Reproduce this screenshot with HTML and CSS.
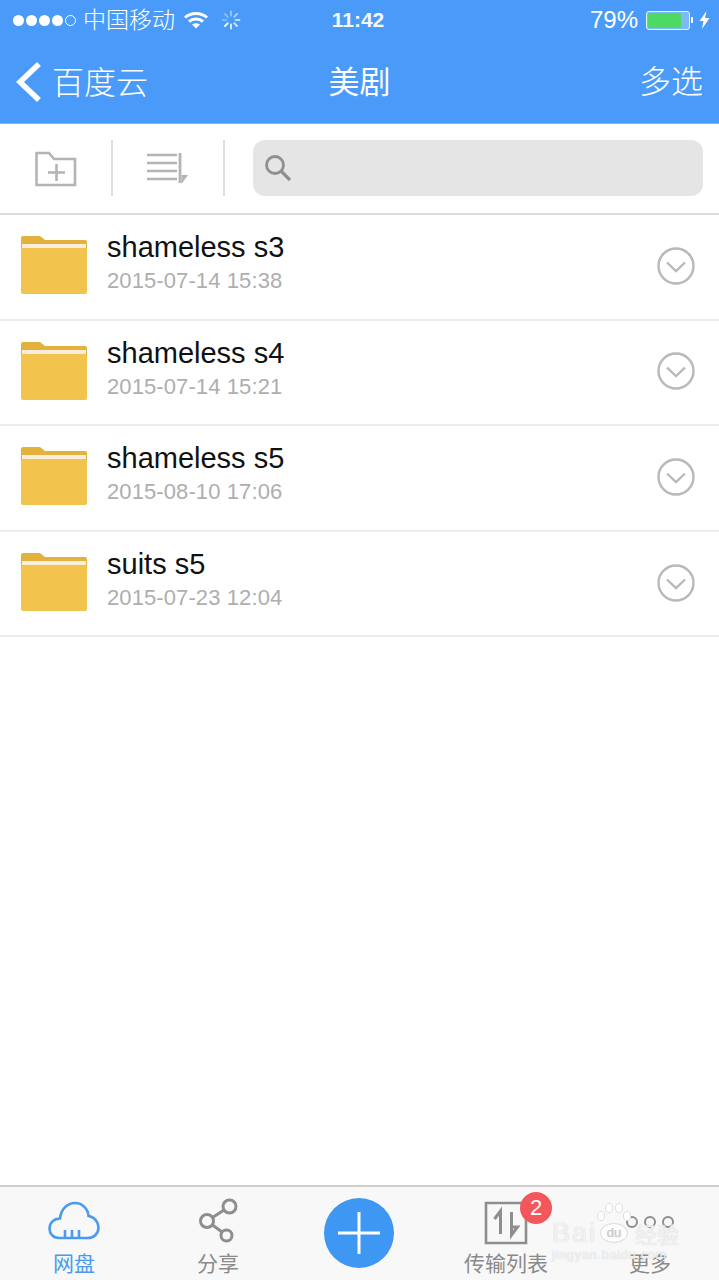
FILE: index.html
```html
<!DOCTYPE html>
<html lang="zh-CN">
<head>
    <meta charset="UTF-8">
    <meta name="viewport" content="width=device-width, initial-scale=1.0">
    <title>美剧</title>
    <link rel="stylesheet" href="styles.css">
</head>
<body>
<div class="app">
    <header class="top">
        <div class="status">
            <div class="status-left">
                <span class="dots"><i></i><i></i><i></i><i></i><i class="off"></i></span>
                <span class="carrier">中国移动</span>
                <svg class="wifi" width="24" height="18" viewBox="0 0 24 18">
                    <path d="M1 6.500C7 1 17 1 23 6.500" fill="none" stroke="#fff" stroke-width="3"/>
                    <path d="M5 10.500C9 7 15 7 19 10.500" fill="none" stroke="#fff" stroke-width="3"/>
                    <path d="M8 13.500C10.500 11.800 13.500 11.800 16 13.500L12 17.500Z" fill="#fff"/>
                </svg>
                <svg class="spinner" width="20" height="20" viewBox="0 0 20 20" stroke="#fff" stroke-width="1.800" stroke-linecap="round">
                    <path d="M10 1.500V5.500" opacity=".45"/>
                    <path d="M16 4L13.200 6.800" opacity=".55"/>
                    <path d="M18.500 10H14.500" opacity=".65"/>
                    <path d="M16 16L13.200 13.200" opacity=".75"/>
                    <path d="M10 18.500V14.500" opacity=".85"/>
                    <path d="M4 16L6.800 13.200"/>
                    <path d="M1.500 10H5.500" opacity=".3"/>
                    <path d="M4 4L6.800 6.800" opacity=".35"/>
                </svg>
            </div>
            <div class="time">11:42</div>
            <div class="status-right">
                <span class="percent">79%</span>
                <span class="battery"><span class="battery-level"></span></span>
                <span class="battery-tip"></span>
                <svg class="bolt" width="11" height="18" viewBox="0 0 11 18"><path d="M7.500 0L0.500 10H4.500L3 18L10.500 7H6Z" fill="#fff"/></svg>
            </div>
        </div>
        <nav class="navbar">
            <div class="nav-back">
                <svg width="26" height="42" viewBox="0 0 26 42"><path d="M23 3L4 21L23 39" fill="none" stroke="#fff" stroke-width="5.500"/></svg>
                <span>百度云</span>
            </div>
            <div class="nav-title">美剧</div>
            <div class="nav-action">多选</div>
        </nav>
    </header>

    <div class="toolbar">
        <div class="tool">
            <svg width="42" height="36" viewBox="0 0 42 36" fill="none" stroke="#b4b4b4" stroke-width="2.600">
                <path d="M1.500 34V2H14L19 8H40V34Z"/>
                <path d="M13 21.500H30M21.500 13V30"/>
            </svg>
        </div>
        <div class="tool-sep"></div>
        <div class="tool tool-sort">
            <svg width="42" height="32" viewBox="0 0 42 32" fill="none" stroke="#b4b4b4" stroke-width="2.600">
                <path d="M0 2H30M0 10H30M0 18H30M0 26H30"/>
                <path d="M33 0V30" stroke-width="2.800"/>
                <path d="M34.500 31V22H41Z" fill="#b4b4b4" stroke="none"/>
            </svg>
        </div>
        <div class="tool-sep"></div>
        <div class="search">
            <svg width="30" height="30" viewBox="0 0 30 30" fill="none" stroke="#8f8f8f">
                <circle cx="12" cy="12" r="8.500" stroke-width="2.800"/>
                <path d="M18 18L27 27" stroke-width="3.200"/>
            </svg>
        </div>
    </div>

    <ul class="files">
        <li class="file">
            <svg class="folder" width="66" height="58" viewBox="0 0 66 58">
                <path d="M0 2Q0 0 2 0H19L24 4H64Q66 4 66 6V20H0Z" fill="#e3b23c"/>
                <rect y="12" width="66" height="46" rx="2" fill="#f2c44e"/>
                <rect x="1" y="8" width="64" height="4" fill="#fbeedd"/>
            </svg>
            <div class="file-info">
                <div class="file-name">shameless s3</div>
                <div class="file-date">2015-07-14 15:38</div>
            </div>
            <svg class="more-btn" width="38" height="38" viewBox="0 0 38 38" fill="none" stroke="#b9b9b9">
                <circle cx="19" cy="19" r="17.500" stroke-width="2.400"/>
                <path d="M10 15.500L19 24L28 15.500" stroke-width="2.400"/>
            </svg>
        </li>
        <li class="file">
            <svg class="folder" width="66" height="58" viewBox="0 0 66 58">
                <path d="M0 2Q0 0 2 0H19L24 4H64Q66 4 66 6V20H0Z" fill="#e3b23c"/>
                <rect y="12" width="66" height="46" rx="2" fill="#f2c44e"/>
                <rect x="1" y="8" width="64" height="4" fill="#fbeedd"/>
            </svg>
            <div class="file-info">
                <div class="file-name">shameless s4</div>
                <div class="file-date">2015-07-14 15:21</div>
            </div>
            <svg class="more-btn" width="38" height="38" viewBox="0 0 38 38" fill="none" stroke="#b9b9b9">
                <circle cx="19" cy="19" r="17.500" stroke-width="2.400"/>
                <path d="M10 15.500L19 24L28 15.500" stroke-width="2.400"/>
            </svg>
        </li>
        <li class="file">
            <svg class="folder" width="66" height="58" viewBox="0 0 66 58">
                <path d="M0 2Q0 0 2 0H19L24 4H64Q66 4 66 6V20H0Z" fill="#e3b23c"/>
                <rect y="12" width="66" height="46" rx="2" fill="#f2c44e"/>
                <rect x="1" y="8" width="64" height="4" fill="#fbeedd"/>
            </svg>
            <div class="file-info">
                <div class="file-name">shameless s5</div>
                <div class="file-date">2015-08-10 17:06</div>
            </div>
            <svg class="more-btn" width="38" height="38" viewBox="0 0 38 38" fill="none" stroke="#b9b9b9">
                <circle cx="19" cy="19" r="17.500" stroke-width="2.400"/>
                <path d="M10 15.500L19 24L28 15.500" stroke-width="2.400"/>
            </svg>
        </li>
        <li class="file">
            <svg class="folder" width="66" height="58" viewBox="0 0 66 58">
                <path d="M0 2Q0 0 2 0H19L24 4H64Q66 4 66 6V20H0Z" fill="#e3b23c"/>
                <rect y="12" width="66" height="46" rx="2" fill="#f2c44e"/>
                <rect x="1" y="8" width="64" height="4" fill="#fbeedd"/>
            </svg>
            <div class="file-info">
                <div class="file-name">suits s5</div>
                <div class="file-date">2015-07-23 12:04</div>
            </div>
            <svg class="more-btn" width="38" height="38" viewBox="0 0 38 38" fill="none" stroke="#b9b9b9">
                <circle cx="19" cy="19" r="17.500" stroke-width="2.400"/>
                <path d="M10 15.500L19 24L28 15.500" stroke-width="2.400"/>
            </svg>
        </li>
    </ul>

    <footer class="tabs">
        <div class="tab tab-active">
            <svg width="52" height="40" viewBox="0 0 52 40" fill="none" stroke="#4a9bf0" stroke-width="2.600">
                <path d="M11 37C5 37 1.500 32.500 1.500 27.500C1.500 22 6 17.500 12 17.500C13 8 19.500 2 27 2C34.500 2 40 8 40.500 15C46.500 16 50.500 21 50.500 26.500C50.500 32.500 46 37 40 37Z"/>
                <path d="M17 37V29M24 37V29M31 37V29"/>
            </svg>
            <span>网盘</span>
        </div>
        <div class="tab">
            <svg class="icon-share" width="42" height="46" viewBox="0 0 42 46" fill="none" stroke="#8e8e8e" stroke-width="3">
                <circle cx="30.500" cy="8.500" r="6.500"/>
                <circle cx="8" cy="23" r="6.500"/>
                <circle cx="27.500" cy="37.500" r="5.500"/>
                <path d="M13.500 19.500L25 12M13.500 27L23 34"/>
            </svg>
            <span>分享</span>
        </div>
        <div class="tab tab-add">
            <div class="add-btn">
                <svg width="42" height="42" viewBox="0 0 42 42"><path d="M0 21H42M21 0V42" stroke="#fff" stroke-width="3"/></svg>
            </div>
        </div>
        <div class="tab">
            <div class="transfer">
                <svg width="44" height="44" viewBox="0 0 44 44" fill="none" stroke="#8e8e8e" stroke-width="2.600">
                    <path d="M2 2H42V42H2Z"/>
                    <path d="M16.500 33V11M10.500 18L16.500 10V18M27.500 11V33M27.500 34V26L33.500 26Z" stroke-width="3"/>
                </svg>
                <span class="badge">2</span>
            </div>
            <span>传输列表</span>
        </div>
        <div class="tab">
            <div class="more-dots"><i></i><i></i><i></i></div>
            <span>更多</span>
        </div>
        <!-- watermark of the source site, sits over the tab bar -->
        <div class="watermark">
            <svg class="wm-paw" width="34" height="24" viewBox="0 0 34 24" fill="#fff" stroke="#dedede">
                <ellipse cx="4" cy="13" rx="3.500" ry="4.500"/>
                <ellipse cx="12" cy="5" rx="3.500" ry="4.500"/>
                <ellipse cx="22" cy="5" rx="3.500" ry="4.500"/>
                <ellipse cx="30" cy="13" rx="3.500" ry="4.500"/>
            </svg>
            <div class="wm-main"><span class="wm-bai">Bai</span><span class="wm-du">du</span><span class="wm-cn">经验</span></div>
            <div class="wm-url">jingyan.baidu.com</div>
        </div>
    </footer>
</div>
</body>
</html>
```

FILE: styles.css
```css
* {
    box-sizing: border-box;
}
body {
    margin: 0;
    background-color: #fff;
    font-family: "Liberation Sans", "Noto Sans CJK SC", sans-serif;
}
.app {
    width: 719px;
    height: 1280px;
    display: flex;
    flex-direction: column;
    overflow: hidden;
}

/* blue header */
.top {
    height: 124px;
    background-color: #4a9bf9;
    color: #fff;
    border-bottom: 1px solid #7fb4ee;
}
.status {
    height: 40px;
    padding: 0 9px 0 13px;
    display: grid;
    grid-template-columns: 1fr auto 1fr;
    align-items: center;
}
.status-left,
.status-right {
    display: flex;
    align-items: center;
}
.status-right {
    justify-content: flex-end;
}
.dots {
    display: flex;
    gap: 2px;
}
.dots i {
    width: 11px;
    height: 11px;
    border-radius: 50%;
    background-color: #fff;
}
.dots i.off {
    background: none;
    border: 1px solid #fff;
}
.carrier {
    margin-left: 7px;
    font-size: 23px;
    font-weight: 300;
    line-height: 30px;
}
.wifi {
    margin-left: 9px;
}
.spinner {
    margin-left: 13px;
}
.time {
    margin-right: 7px;
    font-size: 21px;
    font-weight: bold;
    opacity: 0.95;
}
.percent {
    font-size: 24px;
    margin-right: 8px;
}
.battery {
    width: 44px;
    height: 19px;
    padding: 1px;
    background-color: #7fb8f6;
    border: 1px solid #e8f2fd;
    border-radius: 3px;
}
.battery-level {
    display: block;
    width: 33px;
    height: 100%;
    background-color: #4cd964;
}
.battery-tip {
    width: 2px;
    height: 6px;
    margin-left: 1px;
    background-color: #fff;
}
.bolt {
    margin-left: 6px;
}
.navbar {
    height: 83px;
    padding: 0 16px;
    display: grid;
    grid-template-columns: 1fr auto 1fr;
    align-items: center;
    font-weight: 300;
}
.nav-back {
    display: flex;
    align-items: center;
    gap: 10px;
    font-size: 32px;
}
.nav-back span {
    margin-bottom: 4px;
}
.nav-title {
    margin-bottom: 4px;
    font-size: 31px;
    font-weight: 400;
}
.nav-action {
    margin-bottom: 6px;
    text-align: right;
    font-size: 32px;
}

/* toolbar under header */
.toolbar {
    height: 91px;
    padding: 16px 16px 0 0;
    display: flex;
    align-items: flex-start;
    border-bottom: 2px solid #dcdcdc;
}
.tool {
    width: 111px;
    height: 57px;
    display: flex;
    align-items: center;
    justify-content: center;
}
.tool-sort {
    width: 110px;
}
.tool-sep {
    width: 2px;
    height: 56px;
    background-color: #dedede;
}
.search {
    flex: 1;
    height: 56px;
    margin-left: 28px;
    padding-left: 10px;
    display: flex;
    align-items: center;
    background-color: #e5e5e5;
    border-radius: 12px;
}

/* file list */
.files {
    flex: 1;
    margin: 0;
    padding: 0;
    list-style: none;
}
.file {
    height: 105.6px;
    padding: 0 24px 0 21px;
    display: flex;
    align-items: center;
    border-bottom: 2px solid #ececec;
}
.folder {
    margin-bottom: 3px;
}
.file-info {
    flex: 1;
    margin: 0 0 9px 20px;
}
.file-name {
    font-size: 29px;
    line-height: 34px;
    color: #111;
}
.file-date {
    margin-top: 4px;
    font-size: 22px;
    letter-spacing: 0.1px;
    line-height: 26px;
    color: #aeaeae;
}
.more-btn {
    margin-bottom: 2px;
}

/* bottom tabs */
.tabs {
    position: relative;
    height: 95px;
    padding-left: 2px;
    display: grid;
    grid-template-columns: repeat(5, 144px);
    background-color: #f8f8f8;
    border-top: 2px solid #cfcfcf;
}
.tab {
    position: relative;
    height: 93px;
    display: flex;
    flex-direction: column;
    align-items: center;
    justify-content: flex-end;
    padding-bottom: 3px;
    font-size: 21px;
    line-height: 26px;
    color: #8a8a8a;
}
.tab svg {
    margin-bottom: 10px;
}
.tab .icon-share {
    margin: 0 -4px 7px 0;
}
.tab-active {
    color: #4a9bf0;
}
.tab-add {
    justify-content: flex-start;
    padding-bottom: 0;
}
.add-btn {
    width: 70px;
    height: 70px;
    margin: 11px 6px 0 0;
    display: flex;
    align-items: center;
    justify-content: center;
    background-color: #3d97f3;
    border-radius: 50%;
}
.tab .add-btn svg {
    margin: 0;
}
.transfer {
    position: relative;
    height: 50px;
}
.badge {
    position: absolute;
    top: -9px;
    right: -24px;
    width: 32px;
    height: 32px;
    background-color: #f4575b;
    border-radius: 50%;
    color: #fff;
    font-size: 22px;
    line-height: 32px;
    text-align: center;
}
.more-dots {
    height: 62px;
    display: flex;
    gap: 6px;
    padding-top: 27px;
}
.more-dots i {
    width: 12px;
    height: 12px;
    border: 2px solid #8e8e8e;
    border-radius: 50%;
}
.watermark {
    position: absolute;
    top: 33px;
    left: 552px;
    width: 130px;
    color: rgba(255, 255, 255, 0.8);
    text-shadow: 0 0 1px #bdbdbd;
}
.wm-main {
    display: flex;
    align-items: center;
    height: 26px;
}
.wm-bai {
    width: 46px;
    font-size: 27px;
    letter-spacing: 2px;
}
.wm-du {
    width: 28px;
    height: 20px;
    margin: 0 7px 0 2px;
    background-color: rgba(255, 255, 255, 0.7);
    border: 1px solid #dedede;
    border-radius: 50%;
    color: #cfcfcf;
    font-size: 13px;
    line-height: 18px;
    text-align: center;
}
.wm-cn {
    font-size: 22px;
}
.wm-url {
    margin-top: 2px;
    font-size: 13px;
    line-height: 14px;
    letter-spacing: 0.6px;
    white-space: nowrap;
}
.wm-paw {
    position: absolute;
    top: -17px;
    left: 45px;
}
```
